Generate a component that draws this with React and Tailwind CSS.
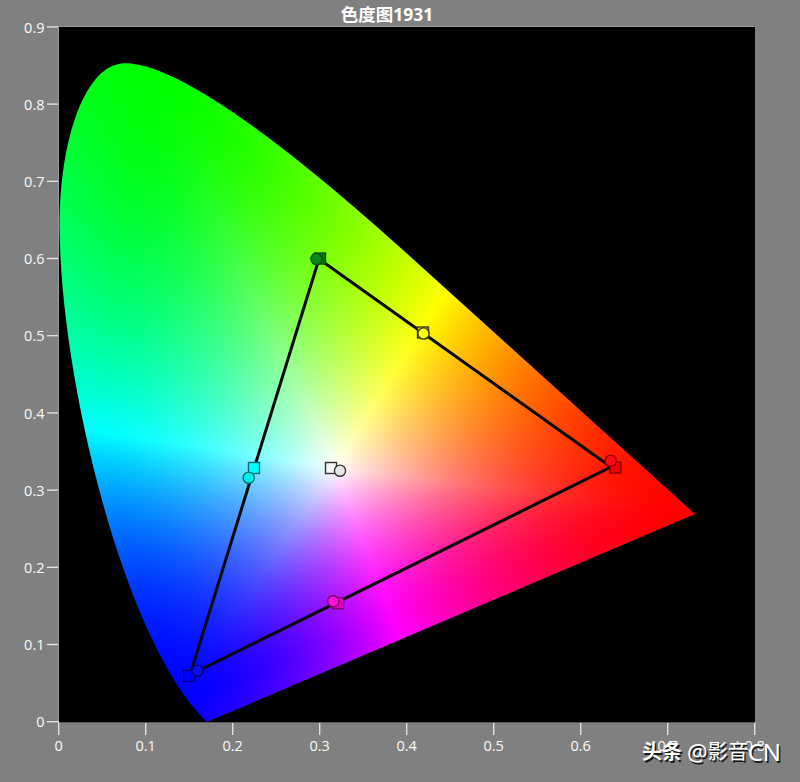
import React, { useEffect, useRef } from 'react';

const textFont = { fontFamily: '"Open Sans", "Noto Sans", sans-serif' };
const cjkFont = { fontFamily: '"Noto Sans", "Noto Sans CJK SC", sans-serif' };

// plot scale, page pixels
const toPxX = (x) => 58.7 + x * 870;
const toPxY = (y) => 721.7 - y * 772;

const markers = [
  { kind: 'square', x: 254, y: 468, fill: '#00ffff', stroke: '#0c6a6e' },
  { kind: 'circle', x: 248.7, y: 477.7, fill: '#00f0e8', stroke: '#0c6a6e' },
  { kind: 'square', x: 320, y: 258.5, fill: '#008000', stroke: '#0d4d0d' },
  { kind: 'circle', x: 316.5, y: 259, fill: '#0a8a14', stroke: '#0d4d0d' },
  { kind: 'square', x: 423, y: 332.5, fill: '#f4f400', stroke: '#3a3a10' },
  { kind: 'circle', x: 423.5, y: 333.5, fill: '#ffff10', stroke: '#3a3a10' },
  { kind: 'square', x: 615.5, y: 467.5, fill: '#f00000', stroke: '#8a0000' },
  { kind: 'circle', x: 610.7, y: 460.7, fill: '#ff0a14', stroke: '#8a0000' },
  { kind: 'square', x: 338, y: 603.3, fill: '#e400c4', stroke: '#7a0070' },
  { kind: 'circle', x: 333.3, y: 601.3, fill: '#ff10d8', stroke: '#7a0070' },
  { kind: 'square', x: 189, y: 676, fill: '#0000ff', stroke: '#00007a' },
  { kind: 'circle', x: 197.5, y: 670.7, fill: '#0a0aff', stroke: '#00007a' },
  { kind: 'square', x: 331, y: 468, fill: '#f6f6f6', stroke: '#333333' },
  { kind: 'circle', x: 340, y: 470.7, fill: '#e6e6e6', stroke: '#333333' },
];

const xTicks = [0, 0.1, 0.2, 0.3, 0.4, 0.5, 0.6, 0.7, 0.8];
const yTicks = [0, 0.1, 0.2, 0.3, 0.4, 0.5, 0.6, 0.7, 0.8, 0.9];

// hue anchors on the horseshoe edge, page pixels, and the white they fade to
const white = [335, 468];
const anchors = [
  { at: [692, 514], rgb: [1, 0, 0] },
  { at: [440, 300], rgb: [1, 1, 0] },
  { at: [150, 66], rgb: [0, 1, 0] },
  { at: [93, 430], rgb: [0, 1, 1] },
  { at: [178, 700], rgb: [0, 0, 1] },
  { at: [395, 625], rgb: [1, 0, 1] },
];
const SATURATION = 1.8;

function colorAt(px, py) {
  const dx = px - white[0];
  const dy = py - white[1];
  for (let n = 0; n < anchors.length; n++) {
    const c1 = anchors[n];
    const c2 = anchors[(n + 1) % anchors.length];
    const ax = c1.at[0] - white[0];
    const ay = c1.at[1] - white[1];
    const bx = c2.at[0] - white[0];
    const by = c2.at[1] - white[1];
    const det = ax * by - ay * bx;
    let a = (dx * by - dy * bx) / det;
    let b = (ax * dy - ay * dx) / det;
    if (a < -1e-9 || b < -1e-9) continue;
    let w = 1 - a - b;
    if (w < 0) {
      a = a / (a + b);
      b = 1 - a;
      w = 0;
    }
    return [0, 1, 2].map((i) => Math.pow(w + a * c1.rgb[i] + b * c2.rgb[i], SATURATION));
  }
  return [1, 1, 1];
}

function outlinePath() {
  const path = new Path2D();
  path.moveTo(207, 722);
  path.bezierCurveTo(125, 645, 60, 380, 59.5, 225);
  path.bezierCurveTo(59.5, 140, 85, 63.3, 125, 63.3);
  path.bezierCurveTo(190, 63.3, 330, 185, 403, 250);
  path.lineTo(695, 514);
  path.closePath();
  return path;
}

function Chromaticity() {
  const ref = useRef(null);

  useEffect(() => {
    const w = 696;
    const h = 695;
    const off = document.createElement('canvas');
    off.width = w;
    off.height = h;
    const offCtx = off.getContext('2d');
    const img = offCtx.createImageData(w, h);
    for (let j = 0; j < h; j++) {
      for (let i = 0; i < w; i++) {
        const [r, g, b] = colorAt(59 + i + 0.5, 27 + j + 0.5);
        const k = (i + j * w) * 4;
        img.data[k] = 255 * r;
        img.data[k + 1] = 255 * g;
        img.data[k + 2] = 255 * b;
        img.data[k + 3] = 255;
      }
    }
    offCtx.putImageData(img, 0, 0);

    const ctx = ref.current.getContext('2d');
    ctx.translate(-59, -27);
    ctx.fillStyle = '#000';
    ctx.fillRect(59, 27, w, h);
    ctx.save();
    ctx.clip(outlinePath());
    ctx.drawImage(off, 59, 27);
    ctx.restore();
  }, []);

  return <canvas ref={ref} width={696} height={695} className="block w-full h-full" />;
}

function Gamut() {
  return (
    <svg viewBox="59 27 696 695" className="absolute inset-0 w-full h-full">
      <polygon points="319,259 611,467 190,675" fill="none" stroke="#0a0a0a" strokeWidth="3" strokeLinejoin="round" />
      {markers.map((m, i) =>
        m.kind === 'square' ? (
          <rect key={i} x={m.x - 5.5} y={m.y - 5.5} width="11" height="11" fill={m.fill} stroke={m.stroke} strokeWidth="1.4" />
        ) : (
          <circle key={i} cx={m.x} cy={m.y} r="5.6" fill={m.fill} stroke={m.stroke} strokeWidth="1.4" />
        ),
      )}
    </svg>
  );
}

function YAxis() {
  return (
    <svg viewBox="0 27 59 695" className="w-full h-full overflow-visible" style={textFont}>
      {yTicks.map((t) => (
        <g key={t}>
          <line x1="47" x2="59" y1={toPxY(t)} y2={toPxY(t)} stroke="#e8e8e8" strokeWidth="1.3" />
          <text x="44.5" y={toPxY(t) + 5.6} textAnchor="end" fontSize="14.5" fill="#fafafa">{t}</text>
        </g>
      ))}
    </svg>
  );
}

function XAxis() {
  return (
    <svg viewBox="59 722 696 60" className="w-full h-full overflow-visible" style={textFont}>
      {xTicks.map((t) => (
        <g key={t}>
          <line x1={toPxX(t)} x2={toPxX(t)} y1="722" y2="735" stroke="#e8e8e8" strokeWidth="1.3" />
          <text x={toPxX(t)} y="751" textAnchor="middle" fontSize="14.5" fill="#fafafa">{t}</text>
        </g>
      ))}
    </svg>
  );
}

export default function App() {
  return (
    <div className="relative w-[800px] h-[782px] overflow-hidden bg-[#808080]">
      <h1 className="h-[27px] pt-[2px] pr-[26px] text-center text-[17.5px] leading-[24px] font-bold text-white" style={cjkFont}>
        色度图1931
      </h1>
      <div className="grid grid-cols-[59px_696px] grid-rows-[695px_60px]">
        <YAxis />
        <div className="relative bg-black shadow-[-1px_-1px_0_#9a9a9a,0_1px_0_#5a5a5a]">
          <Chromaticity />
          <Gamut />
        </div>
        <div />
        <XAxis />
      </div>
      {/* watermark sits over the axis */}
      <div
        className="absolute left-[642px] top-[737px] flex items-center whitespace-nowrap text-white [text-shadow:1.5px_1.5px_0_#1a1a1a]"
        style={cjkFont}
      >
        <span className="text-[20px] leading-[30px] font-bold">头条</span>
        <span className="ml-[5px] text-[23px] leading-[30px]">@</span>
        <span className="text-[20px] leading-[30px]">影音</span>
        <span className="text-[24px] leading-[30px]">CN</span>
      </div>
    </div>
  );
}
